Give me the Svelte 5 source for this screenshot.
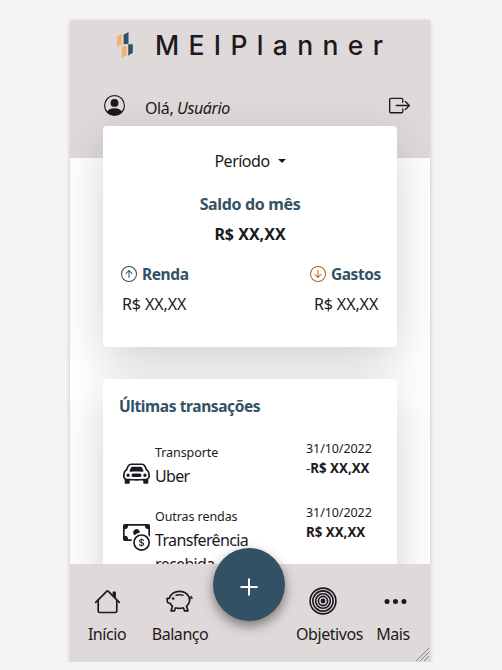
<script>
  const transactions = [
    { icon: 'car', category: 'Transporte', name: 'Uber', date: '31/10/2022', sign: '-', amount: 'R$ XX,XX' },
    { icon: 'cash', category: 'Outras rendas', name: 'Transferência recebida', date: '31/10/2022', sign: '', amount: 'R$ XX,XX' }
  ];
  const rings = [12.9, 10.1, 7.3, 4.6];
</script>

<div class="phone">
  <header>
    <div class="brand">
      <svg class="logo" width="18" height="28" viewBox="0 0 18 28">
        <path fill="#efb468" d="M1 4.5 5.7 1.7v10.6L1 14.4zM5.7 14.2h5v8.6l-5 3.2z" />
        <path fill="#335165" d="M7.6 2.8 12.5 0v11.7l-4.9.6zM12.2 12.3h4.6v8.5l-4.6 3z" />
      </svg>
      <h1>MEIPlanner</h1>
    </div>
    <div class="greeting">
      <svg width="21" height="21" viewBox="0 0 16 16" fill="currentColor">
        <path d="M11 6a3 3 0 1 1-6 0 3 3 0 0 1 6 0z" />
        <path fill-rule="evenodd" d="M0 8a8 8 0 1 1 16 0A8 8 0 0 1 0 8zm8-7a7 7 0 0 0-5.468 11.37C3.242 11.226 4.805 10 8 10s4.757 1.225 5.468 2.37A7 7 0 0 0 8 1z" />
      </svg>
      <p>Olá, <i>Usuário</i></p>
      <svg class="logout" width="21" height="21" viewBox="0 0 16 16" fill="currentColor">
        <path fill-rule="evenodd" d="M10 12.5a.5.5 0 0 1-.5.5h-8a.5.5 0 0 1-.5-.5v-9a.5.5 0 0 1 .5-.5h8a.5.5 0 0 1 .5.5v2a.5.5 0 0 0 1 0v-2A1.5 1.5 0 0 0 9.5 2h-8A1.5 1.5 0 0 0 0 3.5v9A1.5 1.5 0 0 0 1.5 14h8a1.5 1.5 0 0 0 1.5-1.5v-2a.5.5 0 0 0-1 0v2z" />
        <path fill-rule="evenodd" d="M15.854 8.354a.5.5 0 0 0 0-.708l-3-3a.5.5 0 0 0-.708.708L14.293 7.5H5.5a.5.5 0 0 0 0 1h8.793l-2.147 2.146a.5.5 0 0 0 .708.708l3-3z" />
      </svg>
    </div>
  </header>

  <main>
    <section class="card summary">
      <div class="period"><span>Período</span><span class="caret"></span></div>
      <h2>Saldo do mês</h2>
      <strong>R$ XX,XX</strong>
      <div class="split">
        <div>
          <h2>
            <svg width="16" height="16" viewBox="0 0 16 16" fill="#294c58"><path fill-rule="evenodd" d="M1 8a7 7 0 1 0 14 0A7 7 0 0 0 1 8zm15 0A8 8 0 1 1 0 8a8 8 0 0 1 16 0zm-7.5 3.5a.5.5 0 0 1-1 0V5.707L5.354 7.854a.5.5 0 1 1-.708-.708l3-3a.5.5 0 0 1 .708 0l3 3a.5.5 0 0 1-.708.708L8.5 5.707V11.5z" /></svg>
            Renda
          </h2>
          <p>R$ XX,XX</p>
        </div>
        <div>
          <h2>
            <svg width="16" height="16" viewBox="0 0 16 16" fill="#b0601f"><path fill-rule="evenodd" d="M1 8a7 7 0 1 0 14 0A7 7 0 0 0 1 8zm15 0A8 8 0 1 1 0 8a8 8 0 0 1 16 0zM8.5 4.5a.5.5 0 0 0-1 0v5.793L5.354 8.146a.5.5 0 1 0-.708.708l3 3a.5.5 0 0 0 .708 0l3-3a.5.5 0 0 0-.708-.708L8.5 10.293V4.5z" /></svg>
            Gastos
          </h2>
          <p>R$ XX,XX</p>
        </div>
      </div>
    </section>

    <section class="card history">
      <h2>Últimas transações</h2>
      {#each transactions as t}
        <article>
          <svg width="27" height="27" viewBox="0 0 16 16" fill="currentColor">
            {#if t.icon === 'car'}
              <path d="M4 9a1 1 0 1 1-2 0 1 1 0 0 1 2 0Zm10 0a1 1 0 1 1-2 0 1 1 0 0 1 2 0ZM6 8a1 1 0 0 0 0 2h4a1 1 0 1 0 0-2H6ZM4.862 4.276 3.906 6.19a.51.51 0 0 0 .497.731c.91-.073 2.35-.17 3.597-.17 1.247 0 2.688.097 3.597.17a.51.51 0 0 0 .497-.731l-.956-1.913A.5.5 0 0 0 10.691 4H5.309a.5.5 0 0 0-.447.276Z" />
              <path fill-rule="evenodd" d="M2.52 3.515A2.5 2.5 0 0 1 4.82 2h6.362c1 0 1.904.596 2.298 1.515l.792 1.848c.075.175.21.319.38.404.5.25.855.715.965 1.262l.335 1.679c.033.161.049.325.049.49v.413c0 .814-.39 1.543-1 1.997V13.5a.5.5 0 0 1-.5.5h-2a.5.5 0 0 1-.5-.5v-1.338c-1.292.048-2.745.088-4 .088s-2.708-.04-4-.088V13.5a.5.5 0 0 1-.5.5h-2a.5.5 0 0 1-.5-.5v-1.892c-.61-.454-1-1.183-1-1.997v-.413a2.5 2.5 0 0 1 .049-.49l.335-1.68c.11-.546.465-1.012.964-1.261a.807.807 0 0 0 .381-.404l.792-1.848ZM4.82 3a1.5 1.5 0 0 0-1.379.91l-.792 1.847a1.8 1.8 0 0 1-.853.904.807.807 0 0 0-.43.564L1.03 8.904a1.5 1.5 0 0 0-.03.294v.413c0 .796.62 1.448 1.408 1.484 1.555.07 3.786.155 5.592.155 1.806 0 4.037-.084 5.592-.155A1.479 1.479 0 0 0 15 9.611v-.413c0-.099-.01-.197-.03-.294l-.335-1.68a.807.807 0 0 0-.43-.563 1.807 1.807 0 0 1-.853-.904l-.792-1.848A1.5 1.5 0 0 0 11.18 3H4.82Z" />
            {:else}
              <path fill-rule="evenodd" d="M11 15a4 4 0 1 0 0-8 4 4 0 0 0 0 8zm5-4a5 5 0 1 1-10 0 5 5 0 0 1 10 0z" />
              <path d="M9.438 11.944c.047.596.518 1.06 1.363 1.116v.44h.375v-.443c.875-.061 1.386-.529 1.386-1.207 0-.618-.39-.936-1.09-1.1l-.296-.07v-1.2c.376.043.614.248.671.532h.658c-.047-.575-.54-1.024-1.329-1.073V8.5h-.375v.45c-.747.073-1.255.522-1.255 1.158 0 .562.378.92 1.007 1.066l.248.061v1.272c-.384-.058-.639-.27-.696-.563h-.668zm1.36-1.354c-.369-.085-.569-.26-.569-.522 0-.294.216-.514.572-.578v1.1h-.003zm.432.746c.449.104.655.272.655.569 0 .339-.257.571-.709.614v-1.195l.054.012z" />
              <path d="M1 0a1 1 0 0 0-1 1v8a1 1 0 0 0 1 1h4.083c.058-.344.145-.678.258-1H3a2 2 0 0 0-2-2V3a2 2 0 0 0 2-2h10a2 2 0 0 0 2 2v3.528c.38.34.717.728 1 1.154V1a1 1 0 0 0-1-1H1z" />
              <path d="M9.998 5.083 10 5a2 2 0 1 0-3.132 1.65 5.982 5.982 0 0 1 3.13-1.567z" />
            {/if}
          </svg>
          <div class="what">
            <small>{t.category}</small>
            <p>{t.name}</p>
          </div>
          <div class="when">
            <small>{t.date}</small>
            <p>{t.sign}<b>{t.amount}</b></p>
          </div>
        </article>
      {/each}
    </section>
  </main>

  <nav>
    <div class="item home">
      <svg width="27" height="27" viewBox="0 0 16 16" fill="currentColor">
        <path fill-rule="evenodd" d="M2 13.5V7h1v6.5a.5.5 0 0 0 .5.5h9a.5.5 0 0 0 .5-.5V7h1v6.5a1.5 1.5 0 0 1-1.5 1.5h-9A1.5 1.5 0 0 1 2 13.5zm11-11V6l-2-2V2.5a.5.5 0 0 1 .5-.5h1a.5.5 0 0 1 .5.5z" />
        <path fill-rule="evenodd" d="M7.293 1.5a1 1 0 0 1 1.414 0l6.647 6.646a.5.5 0 0 1-.708.708L8 2.207 1.354 8.854a.5.5 0 1 1-.708-.708L7.293 1.5z" />
      </svg>
      <span>Início</span>
    </div>
    <div class="item balance">
      <svg width="27" height="27" viewBox="0 0 16 16" fill="currentColor">
        <path d="M5 6.25a.75.75 0 1 1-1.5 0 .75.75 0 0 1 1.5 0zm1.138-1.496A6.613 6.613 0 0 1 7.964 4.5c.666 0 1.303.097 1.893.273a.5.5 0 0 0 .286-.958A7.602 7.602 0 0 0 7.964 3.5c-.734 0-1.441.103-2.102.292a.5.5 0 1 0 .276.962z" />
        <path fill-rule="evenodd" d="M7.964 1.527c-2.977 0-5.571 1.704-6.32 4.125h-.55A1 1 0 0 0 .11 6.824l.254 1.46a1.5 1.5 0 0 0 1.478 1.243h.263c.3.513.688.978 1.145 1.382l-.729 2.477a.5.5 0 0 0 .48.641h2a.5.5 0 0 0 .471-.332l.482-1.351c.635.173 1.31.267 2.011.267.707 0 1.388-.095 2.028-.272l.543 1.372a.5.5 0 0 0 .465.316h2a.5.5 0 0 0 .478-.645l-.761-2.506C13.81 9.895 14.5 8.559 14.5 7.069c0-.145-.007-.29-.02-.431.261-.11.508-.266.705-.444.315.306.815.306.815-.417 0 .223-.5.223-.461-.026a.95.95 0 0 0 .09-.255.7.7 0 0 0-.202-.645.58.58 0 0 0-.707-.098.735.735 0 0 0-.375.562c-.024.243.082.48.32.654a2.112 2.112 0 0 1-.259.153c-.534-2.664-3.284-4.595-6.442-4.595zM2.516 6.26c.455-2.066 2.667-3.733 5.448-3.733 3.146 0 5.536 2.114 5.536 4.542 0 1.254-.624 2.41-1.67 3.248a.5.5 0 0 0-.165.535l.66 2.175h-.985l-.59-1.487a.5.5 0 0 0-.629-.288c-.661.23-1.39.359-2.157.359a6.558 6.558 0 0 1-2.157-.359.5.5 0 0 0-.635.304l-.525 1.471h-.979l.633-2.15a.5.5 0 0 0-.17-.534 4.649 4.649 0 0 1-1.284-1.541.5.5 0 0 0-.446-.275h-.56a.5.5 0 0 1-.492-.414l-.254-1.46h.933a.5.5 0 0 0 .488-.393zm12.621-.857a.565.565 0 0 1-.098.21.704.704 0 0 1-.044-.025c-.146-.09-.157-.175-.152-.223a.236.236 0 0 1 .117-.173c.049-.027.08-.021.113.012a.202.202 0 0 1 .064.199z" />
      </svg>
      <span>Balanço</span>
    </div>
    <button class="add" aria-label="+">
      <svg width="18" height="18" viewBox="0 0 18 18" fill="none" stroke="#fff" stroke-width="2"><path d="M9 .5v17M.5 9h17" /></svg>
    </button>
    <div class="item goals">
      <svg class="target" width="28" height="28" viewBox="-14 -14 28 28" fill="none" stroke="currentColor" stroke-width="1.6">
        {#each rings as r}<circle {r} />{/each}
        <circle r="2.4" fill="currentColor" stroke="none" />
      </svg>
      <span>Objetivos</span>
    </div>
    <div class="item more">
      <svg width="27" height="27" viewBox="0 0 16 16" fill="currentColor">
        <path d="M3 9.5a1.5 1.5 0 1 1 0-3 1.5 1.5 0 0 1 0 3zm5 0a1.5 1.5 0 1 1 0-3 1.5 1.5 0 0 1 0 3zm5 0a1.5 1.5 0 1 1 0-3 1.5 1.5 0 0 1 0 3z" />
      </svg>
      <span>Mais</span>
    </div>
    <svg class="grip" width="13" height="13" viewBox="0 0 13 13" stroke="#8c898a" stroke-width="1"><path d="M0 13 13 0M4 13l9-9M8 13l5-5" /></svg>
  </nav>
</div>

<style>
  :global(body) { margin: 0; background: #f4f4f4; }
  h1, h2, p { margin: 0; }
  svg { display: block; flex: none; }
  .phone {
    box-sizing: border-box;
    display: flex;
    flex-direction: column;
    width: 360px;
    height: 642px;
    margin: 20px 0 0 70px;
    background: #fff;
    box-shadow: 0 2px 5px rgba(0, 0, 0, .17), 0 0 1px rgba(0, 0, 0, .15);
    color: #1c1a20;
    font: 16px/24px "Noto Sans", sans-serif;
    position: relative;
  }
  header { flex: none; height: 138px; background: #dfd9da; }
  .brand { display: flex; height: 50px; padding-left: 46px; align-items: flex-start; }
  .logo { margin-top: 12px; }
  h1 {
    margin: 8px 0 0 21px;
    font: 500 26.5px/34px Inter, sans-serif;
    letter-spacing: 9.35px;
    white-space: nowrap;
  }
  .greeting { display: flex; align-items: center; height: 30px; padding: 20px 20px 0 34px; }
  .greeting p { margin: 5px auto 0 20px; letter-spacing: -.4px; }
  main { flex: 1; min-height: 0; overflow: hidden; margin-top: -138px; padding: 106px 33px 0; z-index: 1; }
  .card {
    box-sizing: border-box;
    background: #fff;
    border-radius: 4px;
    box-shadow: 0 16px 48px rgba(0, 0, 0, .175);
  }
  h2 { color: #335165; font-size: 15.5px; font-weight: 700; line-height: 24px; letter-spacing: -.4px; }
  .summary { height: 221px; display: flex; flex-direction: column; align-items: center; padding-top: 23px; }
  .summary > h2 { font-size: 16px; letter-spacing: -.35px; }
  .period { display: flex; align-items: center; gap: 8px; margin-bottom: 19px; letter-spacing: -.5px; }
  .caret { border: 4.6px solid transparent; border-top-color: currentColor; border-bottom: 0; }
  .summary strong { margin: 6px 0 16px; }
  .split { align-self: stretch; display: flex; justify-content: space-between; padding: 0 16px 0 18px; }
  .split h2 { display: flex; align-items: center; gap: 5px; margin-bottom: 6px; }
  .split p { padding-left: 1px; letter-spacing: -.1px; }
  .split div + div p { padding-left: 4px; }
  .history { margin-top: 32px; height: 400px; padding: 15px 16px; }
  .history h2 { margin-bottom: 20px; }
  article { display: flex; height: 64px; padding-left: 4px; }
  article > svg { margin-top: 22px; }
  .what { width: 112px; margin: 3px 0 0 4px; padding-left: 1px; }
  .what p { letter-spacing: -.65px; }
  small { display: block; font-size: 12.5px; line-height: 23px; letter-spacing: -.08px; }
  .when { margin: -1px 0 0 39px; white-space: nowrap; }
  .when p { font-size: 13.3px; line-height: 20px; margin-top: -2px; }
  nav {
    position: relative;
    flex: none;
    display: flex;
    height: 98px;
    padding-left: 18px;
    box-sizing: border-box;
    background: #dfd9da;
    z-index: 2;
  }
  .item { display: flex; flex-direction: column; align-items: center; padding-top: 24px; gap: 7px; white-space: nowrap; letter-spacing: -.45px; }
  .home { width: 38px; }
  .balance { width: 56px; margin-left: 26px; }
  .balance svg { margin-right: 2px; }
  .goals { width: 67px; margin-left: 11px; }
  .more { width: 34px; margin-left: 13px; }
  .more svg { margin-left: 4px; }
  .target { margin: -1px 14px 0 0; }
  .add {
    flex: none;
    display: grid;
    place-items: center;
    width: 72px;
    height: 73px;
    margin: -16px 0 0 5px;
    padding: 5px 0 0;
    border: 0;
    border-radius: 50%;
    background: #335165;
    box-shadow: 0 5px 12px rgba(40, 40, 30, .55);
  }
  .grip { position: absolute; right: 1px; bottom: 1px; }
</style>
